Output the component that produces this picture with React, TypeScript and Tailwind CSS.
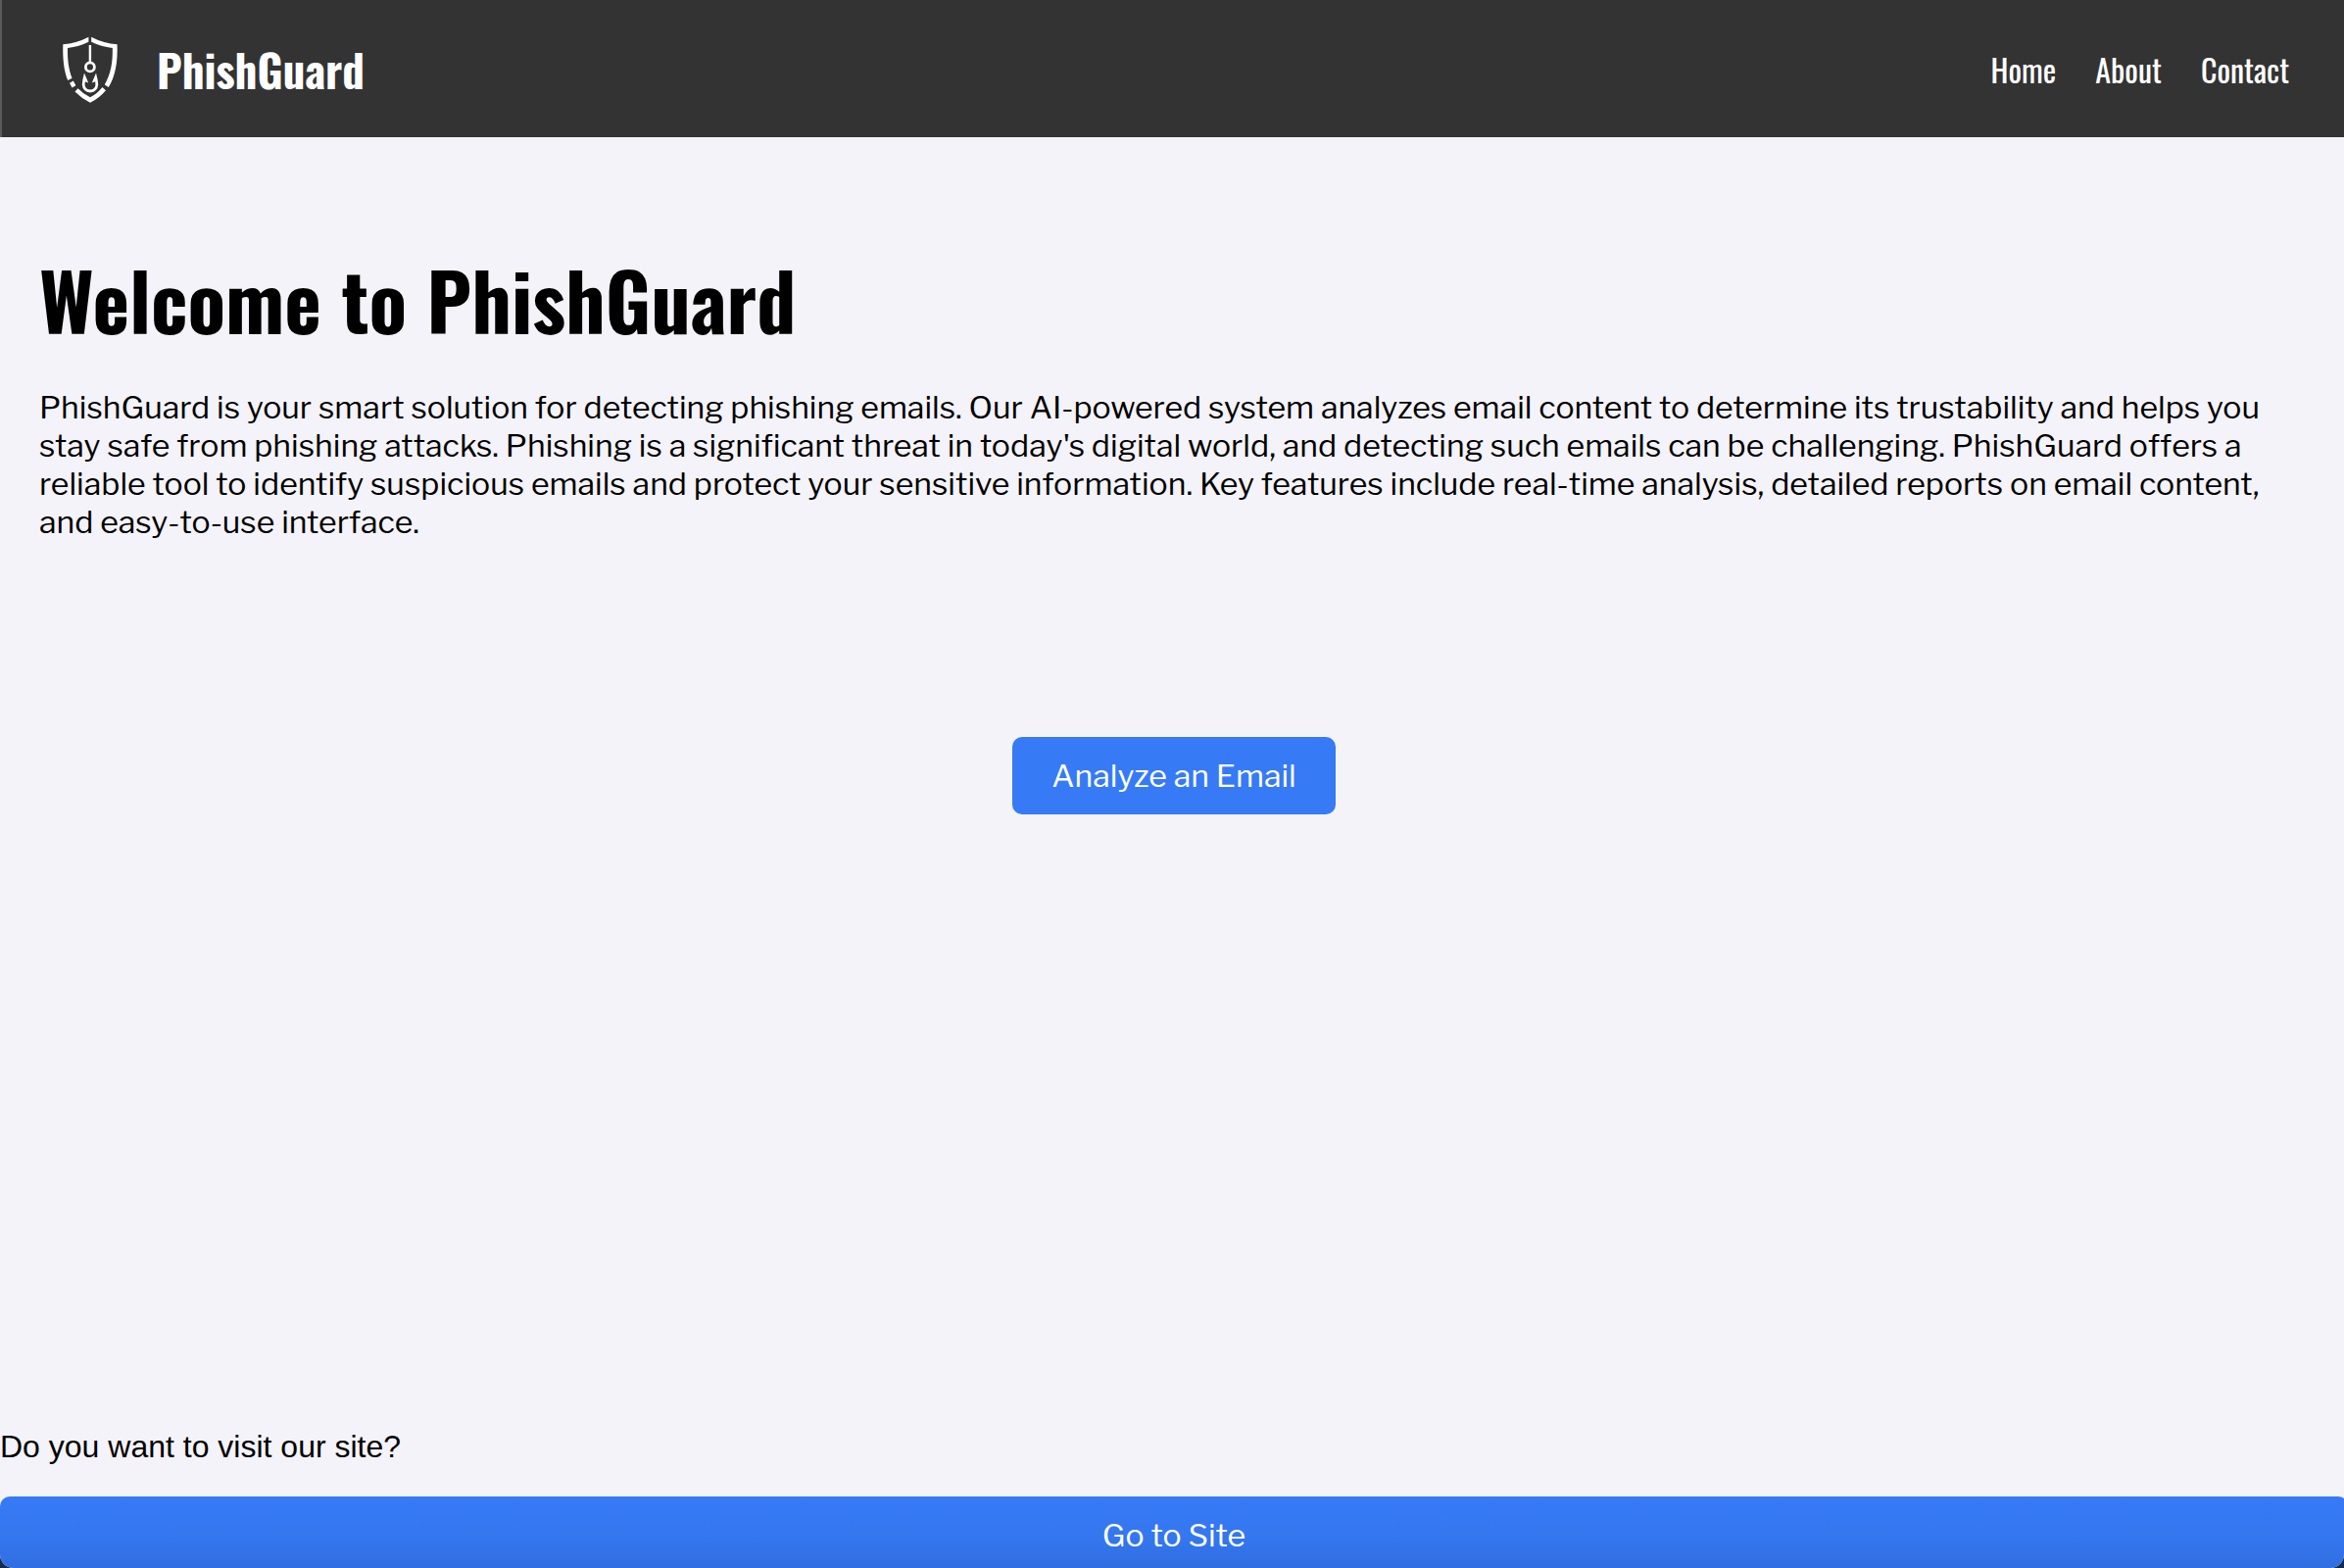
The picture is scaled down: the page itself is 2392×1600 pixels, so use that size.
const links = ["Home", "About", "Contact"];

function ShieldHook() {
  return (
    <svg viewBox="0 0 80 90" className="h-[90px] w-20" fill="#fff" aria-hidden="true">
      <path d="M40.4 12.8 V17.8 Q31 22.6 19 24 C18.8 36 20 46 23.6 54.8 L19.2 57 C14.8 46 14 34 14.3 20.2 Q28 19.4 40.4 12.8 Z" />
      <path d="M43.2 12.8 V17.8 Q53 22.6 64.8 24 C65.2 39 63 50.6 56.8 61.4 L60.8 64 C68 52 70.2 38 69.6 20.2 Q55.6 19.4 43.2 12.8 Z" />
      <path d="M21 59.8 L24.8 57.6 L27.4 62.2 L23.6 64.6 Z" />
      <path d="M29.6 65.2 Q35 71 42 74.2 Q49 71 54.4 64 L58 67.2 Q51 75.4 42 79.8 Q33 75.4 26.4 68.6 Z" />
      <path d="M41.9 21 V38" stroke="#fff" strokeWidth="2.4" />
      <circle cx="41.9" cy="43.4" r="4.5" fill="none" stroke="#fff" strokeWidth="2.8" />
      <path d="M36 49.4 L40.2 59.4 L36.8 58.2 Q35.4 66.4 42 66.6 Q48.6 66.4 47.2 58.2 L43.8 59.4 L48 49.4 Q50 56 50.2 61.6 Q49.4 69.2 42 69.4 Q34.6 69.2 33.8 61.6 Q34 56 36 49.4 Z" />
    </svg>
  );
}

export default function App() {
  return (
    <div className="bg-[#142c4c]">
      <div className="flex h-screen flex-col overflow-hidden rounded-b-[14px] bg-[#f4f3f9] font-['Libre_Franklin','Liberation_Sans',sans-serif] text-[32px] leading-[39px] text-black">
        <header className="flex h-[140px] shrink-0 items-center justify-between border-l-2 border-[#5a5a5a] bg-[#333] pr-14 pl-12 font-['Oswald','Roboto_Condensed',sans-serif] text-white">
          <div className="flex items-center gap-[30px]">
            <ShieldHook />
            <span className="pt-0.5 text-[45px] leading-[66px] font-bold">PhishGuard</span>
          </div>
          <nav className="flex gap-10 pt-0.5">
            {links.map((label) => (
              <a key={label} href="#" className="text-[32px] leading-[48px]">
                {label}
              </a>
            ))}
          </nav>
        </header>

        <main className="flex flex-col pt-[106px] pr-9 pl-10">
          <h1 className="font-['Oswald','Roboto_Condensed',sans-serif] text-[80px] leading-[118px] font-bold">
            Welcome to PhishGuard
          </h1>
          <p className="mt-8">
            PhishGuard is your smart solution for detecting phishing emails. Our AI-powered system analyzes email
            content to determine its trustability and helps you stay safe from phishing attacks. Phishing is a
            significant threat in today's digital world, and detecting such emails can be challenging. PhishGuard
            offers a reliable tool to identify suspicious emails and protect your sensitive information. Key features
            include real-time analysis, detailed reports on email content, and easy-to-use interface.
          </p>
          <button type="button" className="mt-50 self-center rounded-[10px] bg-[#367af6] px-10 py-5 text-white">
            Analyze an Email
          </button>
        </main>

        <footer className="mt-auto -mr-1 -mb-1.5">
          <p className="mb-[31px] font-['Liberation_Sans',Arial,sans-serif]">Do you want to visit our site?</p>
          <button
            type="button"
            className="w-full rounded-[10px] bg-linear-to-b from-[#367af6] via-[#3477ef] to-[#306cdf] px-10 py-5 text-white"
          >
            Go to Site
          </button>
        </footer>
      </div>
    </div>
  );
}
